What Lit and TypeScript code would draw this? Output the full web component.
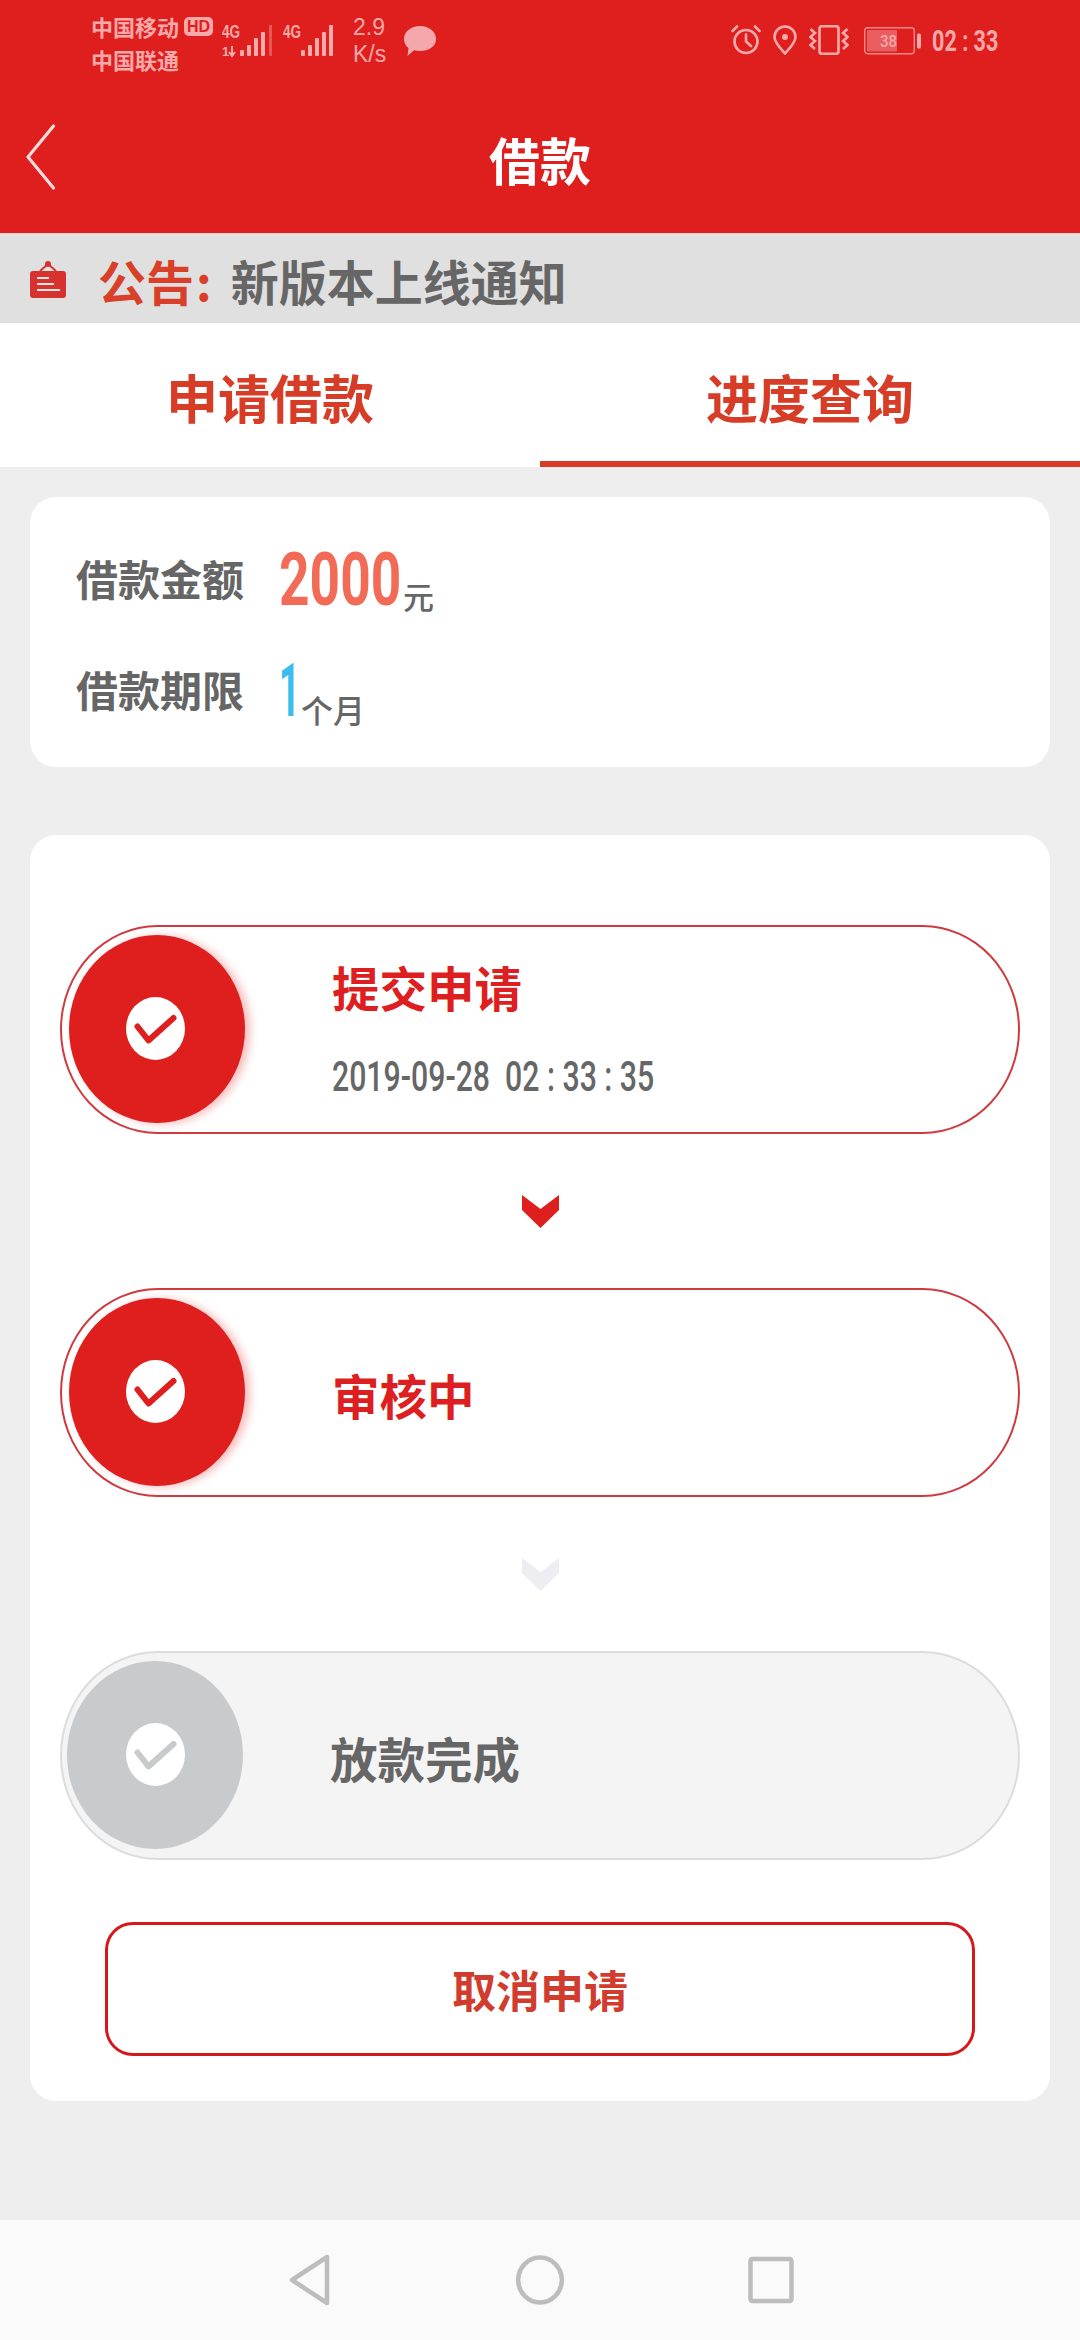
import { LitElement, html, css, svg } from "lit";
import { customElement } from "lit/decorators.js";

const bars = (xs: number[], tops: number[], faintLast = false) =>
  xs.map(
    (x, i) =>
      svg`<rect x=${x} y=${tops[i]} width="4" height=${31 - tops[i]} rx="1" opacity=${faintLast && i === xs.length - 1 ? 0.4 : 1}></rect>`
  );

const checkIcon = svg`<svg class="check" viewBox="0 0 59 63" width="59" height="63"><ellipse cx="29.5" cy="31.5" rx="29.5" ry="31.5" fill="#fff"></ellipse><path d="M11.5 29.5 22.5 43.5 47.5 21" fill="none" stroke="currentColor" stroke-width="6" stroke-linecap="round" stroke-linejoin="round"></path></svg>`;

const chevron = (cls: string) =>
  svg`<svg class=${cls} viewBox="0 0 37 33" width="37" height="33"><path d="M0 0 18.5 14 37 0V15L18.5 33 0 15Z" fill="currentColor"></path></svg>`;

@customElement("app-root")
export class AppRoot extends LitElement {
  static styles = css`
    :host {
      display: flex;
      flex-direction: column;
      width: 1080px;
      height: 2340px;
      overflow: hidden;
      background: #eeeeee;
      font-family: "Noto Sans CJK SC", "Noto Sans", sans-serif;
    }
    .header {
      height: 233px;
      background: #df1e1e;
      display: flex;
      flex-direction: column;
      flex: none;
    }
    .status {
      height: 84px;
      display: flex;
      align-items: flex-start;
      padding: 10px 85px 0 91px;
      color: #f8a9a9;
      box-sizing: border-box;
    }
    .carriers {
      width: 131px;
      flex: none;
      font-size: 22px;
      line-height: 33px;
      font-weight: 700;
    }
    .carrier-line {
      display: flex;
      align-items: center;
      gap: 5px;
      height: 33px;
    }
    .hd {
      width: 29px;
      height: 19px;
      background: #f8a9a9;
      color: #df1e1e;
      border-radius: 5px;
      font: 700 16px/19px "Liberation Sans", sans-serif;
      text-align: center;
      box-sizing: border-box;
    }
    .signal {
      width: 50px;
      height: 50px;
      margin-top: 5px;
      margin-right: 11px;
      fill: #f8a9a9;
      flex: none;
    }
    .speed {
      margin-left: 9px;
      width: 51px;
      flex: none;
      font: 400 23px/27px "Liberation Sans", sans-serif;
      margin-top: 4px;
    }
    .bubble {
      width: 32px;
      height: 30px;
      margin-top: 16px;
      flex: none;
    }
    .right {
      margin-left: auto;
      display: flex;
      align-items: flex-start;
      margin-top: 15px;
    }
    .right svg {
      flex: none;
    }
    .time {
      width: 63px;
      margin-left: 11px;
      font: 700 30px/32px Roboto, sans-serif;
      white-space: nowrap;
    }
    .time span {
      display: inline-block;
      transform-origin: left center;
      transform: scaleX(0.72);
    }
    .titlebar {
      height: 149px;
      display: grid;
      grid-template-columns: 1fr auto 1fr;
      align-items: center;
      padding-left: 26px;
      color: #fff;
    }
    .back {
      display: block;
      margin-top: -4px;
    }
    .title {
      font-size: 51px;
      font-weight: 700;
      line-height: 70px;
      padding-right: 26px;
    }
    .notice {
      flex: none;
      height: 90px;
      box-sizing: border-box;
      border-top: 3px solid #f5dadd;
      background: #e0e0e0;
      display: flex;
      align-items: center;
      padding-left: 30px;
      font-size: 48px;
      font-weight: 700;
      color: #666;
      white-space: nowrap;
    }
    .notice svg {
      margin-right: 32px;
      flex: none;
    }
    .notice .red {
      color: #d9402a;
    }
    .notice .colon {
      color: #d9402a;
      margin: 0 19px 0 2px;
    }
    .tabs {
      flex: none;
      height: 144px;
      display: grid;
      grid-template-columns: 1fr 1fr;
      background: #fff;
    }
    .tab {
      display: flex;
      align-items: center;
      justify-content: center;
      font-size: 52px;
      font-weight: 700;
      color: #d63c26;
      box-sizing: border-box;
      padding-top: 8px;
      border-bottom: 6px solid transparent;
    }
    .tab.on {
      border-bottom-color: #d63c26;
    }
    .main {
      flex: 1;
      padding: 30px 30px 0;
    }
    .card {
      background: #fff;
      border-radius: 26px;
    }
    .info {
      height: 270px;
      box-sizing: border-box;
      padding: 36px 46px 0;
      margin-bottom: 68px;
      color: #666;
    }
    .row {
      display: flex;
      align-items: flex-start;
      height: 111px;
      font-size: 42px;
      font-weight: 700;
    }
    .row .label {
      width: 203px;
      line-height: 90px;
      flex: none;
    }
    .num {
      font: 700 74px/94px Roboto, sans-serif;
      display: inline-block;
      transform-origin: left center;
      transform: scaleX(0.72);
      flex: none;
    }
    .amount {
      width: 124px;
      color: #f26b57;
    }
    .period {
      width: 22px;
      color: #3cbdec;
      transform: scaleX(0.5);
    }
    .unit {
      font-size: 31px;
      font-weight: 500;
      line-height: 36px;
      padding-top: 45px;
    }
    .period + .unit {
      font-size: 32px;
      padding-top: 47px;
    }
    .steps {
      height: 1266px;
      box-sizing: border-box;
      padding: 90px 30px 0;
    }
    .pill {
      height: 209px;
      box-sizing: border-box;
      border: 2px solid #cf3a40;
      border-radius: 98px / 105px;
      display: flex;
      align-items: center;
      padding-left: 7px;
    }
    .circle {
      width: 176px;
      height: 188px;
      margin-top: -2px;
      border-radius: 50%;
      background: #df1e1e;
      color: #df1e1e;
      box-shadow: 5px 1px 9px rgba(223, 30, 30, 0.3);
      display: flex;
      align-items: center;
      justify-content: center;
      flex: none;
    }
    .check {
      margin-right: 4px;
    }
    .text {
      margin-left: 87px;
      color: #dd1f22;
      font-size: 47.5px;
      font-weight: 700;
      line-height: 60px;
    }
    .text .when {
      margin-top: 30px;
      color: #666;
      font: 500 42px/60px Roboto, sans-serif;
      white-space: pre;
      transform-origin: left center;
      transform: scaleX(0.72);
    }
    .first .text {
      padding-top: 5px;
    }
    .second .text,
    .off .text {
      padding-top: 5px;
    }
    .off {
      background: #f4f4f4;
      border-color: #dcdcdc;
      padding-left: 5px;
    }
    .off .circle {
      background: #c9cacc;
      color: #c9cacc;
      box-shadow: none;
    }
    .off .check {
      margin-right: 0;
    }
    .off .text {
      color: #666;
    }
    .arrow {
      height: 154px;
      display: flex;
      align-items: center;
      justify-content: center;
    }
    .arrow .live {
      color: #df1e1e;
    }
    .arrow .idle {
      color: #eeeef2;
    }
    .cancel {
      margin: 62px 45px 0;
      height: 134px;
      box-sizing: border-box;
      border: 3px solid #d5171b;
      border-radius: 28px;
      display: flex;
      align-items: center;
      justify-content: center;
      color: #d03c2e;
      font-size: 44px;
      font-weight: 700;
    }
    .nav {
      flex: none;
      height: 120px;
      background: #fafafa;
      display: flex;
      align-items: center;
      justify-content: center;
      gap: 183px;
      color: #bdbdbd;
    }
  `;

  render() {
    return html`
      <div class="header">
        <div class="status">
          <div class="carriers">
            <div class="carrier-line">中国移动<span class="hd">HD</span></div>
            <div class="carrier-line">中国联通</div>
          </div>
          <svg class="signal" viewBox="0 -10 50 50">
            <text x="0" y="13" font-family="Liberation Sans" font-weight="700" font-size="18" textLength="18" lengthAdjust="spacingAndGlyphs">4G</text>
            <text x="0" y="31" font-family="Liberation Sans" font-weight="700" font-size="13" textLength="8">1</text>
            <path d="M10 21V31M7 27 10 31 13 27" fill="none" stroke="#f8a9a9" stroke-width="2"></path>
            ${bars([18, 25, 32, 39, 47], [25, 20, 13, 7, 0], true)}
          </svg>
          <svg class="signal" viewBox="0 -10 50 50">
            <text x="0" y="13" font-family="Liberation Sans" font-weight="700" font-size="18" textLength="18" lengthAdjust="spacingAndGlyphs">4G</text>
            ${bars([18, 25, 32, 39, 46], [25, 20, 13, 7, 0])}
          </svg>
          <div class="speed">2.9<br />K/s</div>
          <svg class="bubble" viewBox="0 0 32 30">
            <path d="M16 0C25 0 32 5.5 32 13S25 25 16 25C14 25 12 24.800 10 24.300L3.500 30 4.500 22C1.500 19.800 0 16.500 0 13 0 5.500 7 0 16 0Z" fill="#f4a8ac"></path>
          </svg>
          <div class="right">
            <svg width="30" height="30" viewBox="0 0 30 30" fill="none" stroke="#f8a9a9" stroke-width="2.600">
              <circle cx="15" cy="16.500" r="11.500"></circle>
              <path d="M15 9.500V16.500L20 21M1.500 6 6 1.500M28.500 6 24 1.500" stroke-linecap="round"></path>
            </svg>
            <svg style="margin-left:12px" width="24" height="30" viewBox="0 0 24 30" fill="none" stroke="#f8a9a9" stroke-width="2.600">
              <path d="M12 28.500C7 23 1.500 17.500 1.500 12A10.500 10.500 0 0 1 22.500 12C22.500 17.500 17 23 12 28.500Z"></path>
              <circle cx="12" cy="12" r="3" fill="#f8a9a9" stroke="none"></circle>
            </svg>
            <svg style="margin-left:12px" width="40" height="30" viewBox="0 0 40 30" fill="none" stroke="#f8a9a9" stroke-width="2.600">
              <rect x="10.500" y="1.200" width="19" height="27.600" rx="2.500"></rect>
              <path d="M1.500 4 6 8 1.500 12 6 16 1.500 20 6 24M38.500 4 34 8 38.500 12 34 16 38.500 20 34 24"></path>
            </svg>
            <svg style="margin-left:15px" width="57" height="30" viewBox="0 0 57 30">
              <rect x="0.700" y="2.700" width="49.600" height="26" rx="3" fill="none" stroke="#f08a8a" stroke-width="1.400"></rect>
              <rect x="3" y="5" width="30" height="21.500" rx="1" fill="#ea5d5f"></rect>
              <rect x="53" y="8.500" width="4" height="15" rx="1.500" fill="#f8a9a9"></rect>
              <text x="16" y="22" fill="#f8a9a9" font-family="Roboto" font-size="17" font-weight="500" textLength="17" lengthAdjust="spacingAndGlyphs">38</text>
            </svg>
            <div class="time"><span>02 : 33</span></div>
          </div>
        </div>
        <div class="titlebar">
          <svg class="back" width="29" height="66" viewBox="0 0 29 66" fill="none" stroke="#fbdcdc" stroke-width="3.200" stroke-linecap="round" stroke-linejoin="round">
            <path d="M27.500 2 2 33 27.500 64"></path>
          </svg>
          <div class="title">借款</div>
        </div>
      </div>
      <div class="notice">
        <svg width="36" height="37" viewBox="0 0 36 37">
          <path d="M18 3 10 10M18 3 26 10" stroke="#d6322e" stroke-width="2" fill="none"></path>
          <circle cx="18" cy="3" r="3" fill="#d6322e"></circle>
          <rect x="0" y="10" width="36" height="27" rx="3" fill="#d6322e"></rect>
          <path d="M7 17H19M7 23H24M7 29H30" stroke="#f5e3e3" stroke-width="2"></path>
        </svg>
        <span class="red">公告</span><span class="colon">:</span><span>新版本上线通知</span>
      </div>
      <div class="tabs">
        <div class="tab">申请借款</div>
        <div class="tab on">进度查询</div>
      </div>
      <div class="main">
        <div class="card info">
          <div class="row">
            <div class="label">借款金额</div>
            <div class="num amount">2000</div>
            <div class="unit">元</div>
          </div>
          <div class="row">
            <div class="label">借款期限</div>
            <div class="num period">1</div>
            <div class="unit">个月</div>
          </div>
        </div>
        <div class="card steps">
          <div class="pill first">
            <div class="circle">${checkIcon}</div>
            <div class="text">提交申请<div class="when">2019-09-28  02 : 33 : 35</div></div>
          </div>
          <div class="arrow">${chevron("live")}</div>
          <div class="pill second">
            <div class="circle">${checkIcon}</div>
            <div class="text">审核中</div>
          </div>
          <div class="arrow">${chevron("idle")}</div>
          <div class="pill off">
            <div class="circle">${checkIcon}</div>
            <div class="text">放款完成</div>
          </div>
          <div class="cancel">取消申请</div>
        </div>
      </div>
      <div class="nav">
        <svg width="48" height="52" viewBox="0 0 48 52" fill="none" stroke="currentColor" stroke-width="4.500" stroke-linejoin="round">
          <path d="M42 3V49L7 26Z"></path>
        </svg>
        <svg width="48" height="52" viewBox="0 0 48 52" fill="none" stroke="currentColor" stroke-width="4.500">
          <ellipse cx="24" cy="26" rx="21.800" ry="22.500"></ellipse>
        </svg>
        <svg width="48" height="52" viewBox="0 0 48 52" fill="none" stroke="currentColor" stroke-width="4.500" stroke-linejoin="round">
          <rect x="3.500" y="5" width="41" height="42" rx="2"></rect>
        </svg>
      </div>
    `;
  }
}
